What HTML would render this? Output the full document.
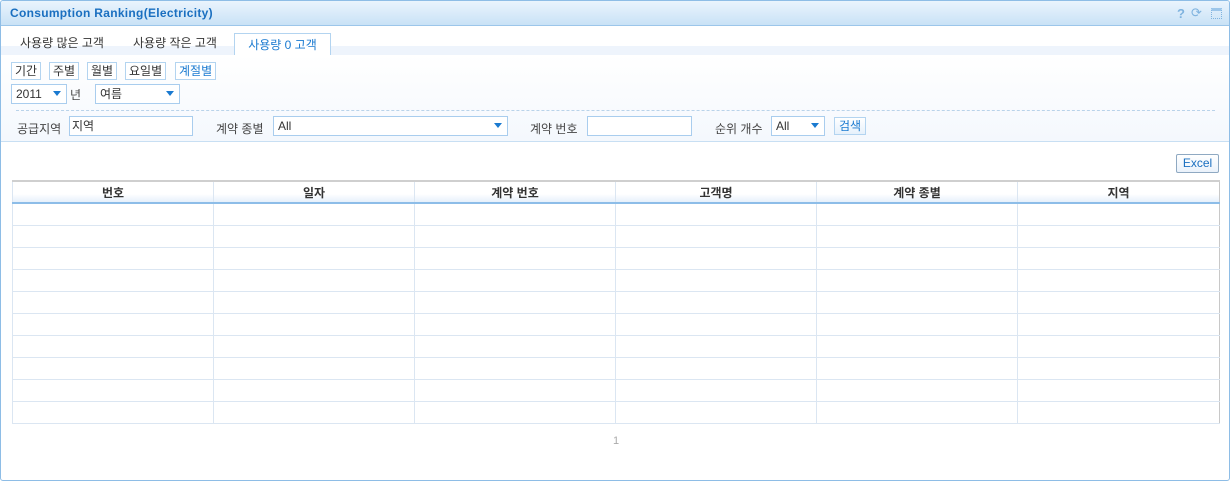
<!DOCTYPE html><html><head><meta charset="utf-8"><style>
body{margin:0;width:1230px;height:481px;background:#fff;font-family:"Liberation Sans","Noto Sans CJK KR",sans-serif;font-size:12px;color:#333;overflow:hidden}
.box{position:absolute;left:0;top:0;width:1228px;height:479px;border:1px solid #8ebde6;border-radius:3px;overflow:hidden}
.hd{height:24px;background:linear-gradient(#eaf4fd,#c9e2f6);border-bottom:1px solid #9cc6ea;position:relative}
.hd b{position:absolute;left:9px;top:5px;color:#1a6fc0;font-size:12px;letter-spacing:.3px}
.tabs{position:absolute;top:25px;left:0;width:1228px;height:29px;background:linear-gradient(#fff 0,#fff 20px,#eef4fc 20px)}
.tab{position:absolute;top:8px;font-size:12px;color:#333}
.act{position:absolute;left:233px;top:7px;width:95px;height:22px;background:#fff;border:1px solid #b3d4f0;border-bottom:none;color:#1a7ad0;text-align:center;line-height:22px}
.flt{position:absolute;top:54px;left:0;width:1228px;height:86px;background:linear-gradient(#fff,#f4f8fd);border-bottom:1px solid #c8dff3}
.btn{position:absolute;top:7px;height:16px;border:1px solid #b3d4f0;background:#fff;line-height:16px;padding:0 3px;font-size:12px}
.sel{position:absolute;height:18px;border:1px solid #a9cdee;background:#fff;line-height:18px;padding-left:4px;font-size:12px;box-sizing:content-box}
.sel i{position:absolute;right:5px;top:6px;width:0;height:0;border-left:4px solid transparent;border-right:4px solid transparent;border-top:5px solid #1a7ad0}
.inp{position:absolute;height:18px;border:1px solid #a9cdee;background:#fff;line-height:18px;padding-left:2px}
.lb{position:absolute;font-size:12px;color:#444}
table{position:absolute;left:11px;top:179px;width:1208px;border-collapse:collapse;border:1px solid #c8c8c8;border-top:2px solid #cfcfcf;table-layout:fixed}
th{height:20px;font-size:12px;color:#333;background:linear-gradient(#fff 60%,#e6f0fb);border-left:1px solid #dbe6f2;border-bottom:2px solid #8dbde8;padding:0}
td{height:21px;border-left:1px solid #dbe6f2;border-bottom:1px solid #dbe6f2;padding:0}
</style></head><body><div class="box">
<div class="hd"><b>Consumption Ranking(Electricity)</b>
<span style="position:absolute;left:1176px;top:5px;color:#7fb3df;font-weight:bold;font-size:13px">?</span>
<span style="position:absolute;left:1190px;top:4px;color:#7fb3df;font-size:13px">⟳</span>
<span style="position:absolute;left:1210px;top:7px;width:9px;height:7px;border:1px dotted #7fb3df;border-top:3px solid #9cc6ea"></span></div>
<div class="tabs"><span class="tab" style="left:19px">사용량 많은 고객</span><span class="tab" style="left:132px">사용량 작은 고객</span><div class="act">사용량 0 고객</div></div>
<div class="flt">
<span class="btn" style="left:10px">기간</span><span class="btn" style="left:48px">주별</span><span class="btn" style="left:86px">월별</span><span class="btn" style="left:124px">요일별</span><span class="btn" style="left:174px;color:#1a7ad0">계절별</span>
<div class="sel" style="left:10px;top:29px;width:50px">2011<i></i></div><span class="lb" style="left:69px;top:31px">년</span>
<div class="sel" style="left:94px;top:29px;width:79px">여름<i></i></div>
<div style="position:absolute;left:15px;top:55px;width:1199px;border-top:1px dashed #b9d3ea"></div>
<span class="lb" style="left:16px;top:65px">공급지역</span><div class="inp" style="left:68px;top:61px;width:120px">지역</div>
<span class="lb" style="left:215px;top:65px">계약 종별</span><div class="sel" style="left:272px;top:61px;width:229px">All<i></i></div>
<span class="lb" style="left:529px;top:65px">계약 번호</span><div class="inp" style="left:586px;top:61px;width:101px"></div>
<span class="lb" style="left:714px;top:65px">순위 개수</span><div class="sel" style="left:770px;top:61px;width:48px">All<i></i></div>
<span class="btn" style="left:833px;top:62px;height:16px;padding:0 4px;color:#1a7ad0;background:linear-gradient(#fff,#e6f1fb)">검색</span>
</div>
<span style="position:absolute;left:1175px;top:153px;width:41px;height:17px;border:1px solid #8fa9c2;border-radius:2px;text-align:center;line-height:17px;color:#1a6fc0;background:linear-gradient(#fff,#eaf2fb)">Excel</span>
<table><colgroup><col style="width:201px"><col style="width:201px"><col style="width:201px"><col style="width:201px"><col style="width:201px"><col></colgroup><tr><th>번호</th><th>일자</th><th>계약 번호</th><th>고객명</th><th>계약 종별</th><th>지역</th></tr>
<tr><td></td><td></td><td></td><td></td><td></td><td></td></tr><tr><td></td><td></td><td></td><td></td><td></td><td></td></tr><tr><td></td><td></td><td></td><td></td><td></td><td></td></tr><tr><td></td><td></td><td></td><td></td><td></td><td></td></tr><tr><td></td><td></td><td></td><td></td><td></td><td></td></tr><tr><td></td><td></td><td></td><td></td><td></td><td></td></tr><tr><td></td><td></td><td></td><td></td><td></td><td></td></tr><tr><td></td><td></td><td></td><td></td><td></td><td></td></tr><tr><td></td><td></td><td></td><td></td><td></td><td></td></tr><tr><td></td><td></td><td></td><td></td><td></td><td></td></tr></table>
<span style="position:absolute;left:612px;top:434px;color:#aaa;font-size:11px">1</span>
</div></body></html>
